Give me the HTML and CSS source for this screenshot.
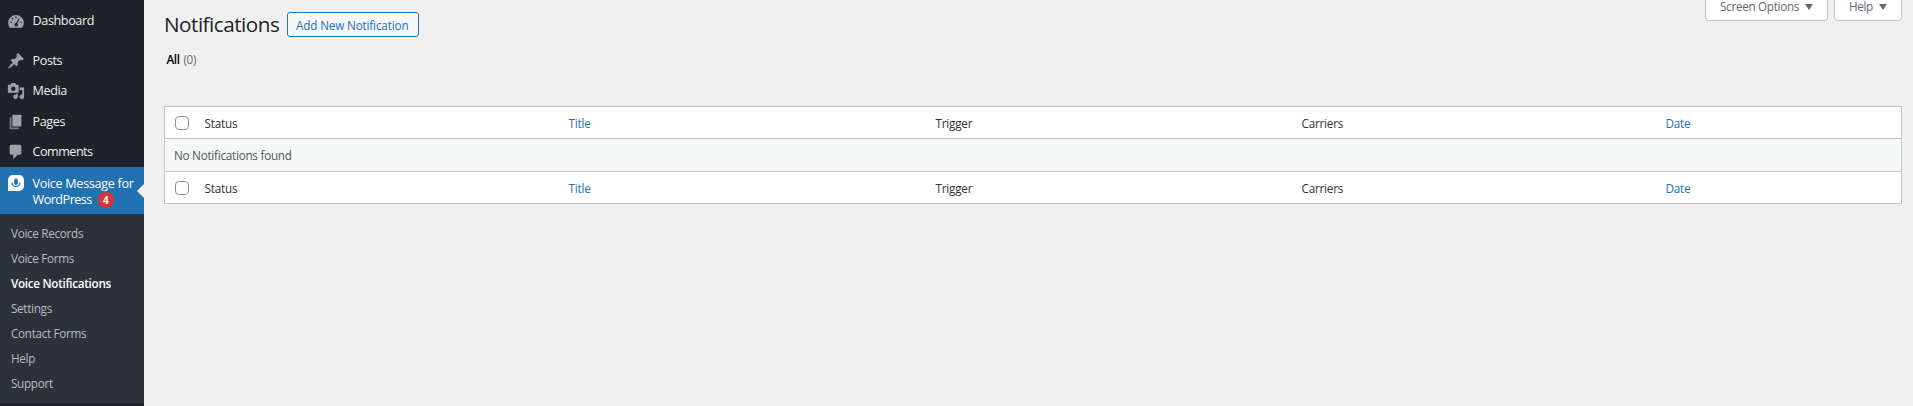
FILE: index.html
```html
<!DOCTYPE html>
<html lang="en">
<head>
<meta charset="utf-8">
<title>Notifications</title>
<link rel="stylesheet" href="styles.css">
</head>
<body>
<div class="app">
  <nav class="sidebar">
    <ul class="menu">
      <li class="item dashboard"><svg class="icon" viewBox="0 0 20 20"><path fill-rule="evenodd" d="M3.200 17.500h13.600A8.500 8.500 0 0 0 18.700 12a8.700 8.700 0 1 0-17.400 0c0 2.100.700 4 1.900 5.500zM10 5a.9.9 0 1 1 0 1.800.9.900 0 0 1 0-1.800zM6 6.500a.9.900 0 1 1 0 1.800.9.900 0 0 1 0-1.800zM13 7l.7.400-2.200 5.300a1.900 1.900 0 1 1-1.300-.5zM4.500 10.500a.9.900 0 1 1 0 1.800.9.900 0 0 1 0-1.800zM15.500 10.500a.9.900 0 1 1 0 1.800.9.900 0 0 1 0-1.800z"/></svg><span>Dashboard</span></li>
      <li class="item"><svg class="icon" viewBox="0 0 20 20"><path d="M10.440 3.020l1.820-1.820 6.360 6.350-1.830 1.820c-1.050-.68-2.480-.57-3.410.36l-.75.750c-.92.930-1.040 2.350-.35 3.410l-1.830 1.820-2.410-2.410-2.800 2.790c-.42.420-3.380 2.710-3.800 2.290s1.860-3.390 2.280-3.810l2.790-2.790L4.100 9.360l1.830-1.820c1.050.690 2.480.570 3.400-.36l.75-.75c.93-.92 1.050-2.350.36-3.410z"/></svg><span>Posts</span></li>
      <li class="item"><svg class="icon" viewBox="0 0 20 20"><path fill-rule="evenodd" d="M13 11V4c0-.55-.45-1-1-1h-1.670L9 1H5L3.670 3H2c-.55 0-1 .45-1 1v7c0 .55.45 1 1 1h10c.55 0 1-.45 1-1zM7 5a2.500 2.500 0 1 1 0 5 2.500 2.500 0 0 1 0-5zM14 6h5v10.500a2.500 2.500 0 1 1-2-2.450V9h-3zM10 14.050V13h2v3.500a2.500 2.500 0 1 1-2-2.450z"/></svg><span>Media</span></li>
      <li class="item"><svg class="icon" viewBox="0 0 20 20"><path d="M6 15V2h10v13z"/><path class="back" d="M5 16h8v2H3V5h2z"/></svg><span>Pages</span></li>
      <li class="item"><svg class="icon" viewBox="0 0 20 20"><path d="M5 2h9c1.100 0 2 .9 2 2v7c0 1.100-.9 2-2 2h-2l-5 5v-5H5c-1.100 0-2-.9-2-2V4c0-1.100.9-2 2-2z"/></svg><span class="t-comments">Comments</span></li>
      <li class="item current"><svg class="icon voice" viewBox="0 0 16 16"><path class="bubble" d="M5 0h6a5 5 0 0 1 5 5v6a5 5 0 0 1-5 5H0V5a5 5 0 0 1 5-5z"/><rect class="mic" x="6.200" y="3.500" width="3.600" height="6.500" rx="1.800"/><path class="arc" d="M4 7.500a4 4 0 0 0 8 0"/></svg><span><span class="t-vm">Voice Message for</span><br><span class="t-wp">WordPress</span><b class="badge">4</b></span></li>
    </ul>
    <ul class="submenu">
      <li>Voice Records</li>
      <li>Voice Forms</li>
      <li class="s-notif">Voice Notifications</li>
      <li>Settings</li>
      <li>Contact Forms</li>
      <li>Help</li>
      <li>Support</li>
    </ul>
  </nav>
  <main class="content">
    <div class="top">
      <div class="heading"><h1>Notifications</h1><a class="add"><span>Add New Notification</span></a></div>
      <div class="screen-meta"><button class="options"><span>Screen Options</span><i></i></button><button class="help"><span>Help</span><i></i></button></div>
    </div>
    <div class="filters"><b>All</b><span>(0)</span></div>
    <div class="table">
      <div class="row head"><i class="check"></i><span>Status</span><a>Title</a><span>Trigger</span><span>Carriers</span><a>Date</a></div>
      <div class="row empty"><span>No Notifications found</span></div>
      <div class="row foot"><i class="check"></i><span>Status</span><a>Title</a><span>Trigger</span><span>Carriers</span><a>Date</a></div>
    </div>
  </main>
</div>
</body>
</html>
```
FILE: styles.css
```css
* { box-sizing: border-box; }
body { margin: 0; background: #f0f0f0; color: #3c434a; font: 12px/18px "Open Sans", "Noto Sans", sans-serif; overflow: hidden; }
ul { list-style: none; margin: 0; padding: 0; }
.app { display: flex; height: 406px; }
.sidebar { width: 144px; background: #1d2327; flex: none; }
.menu { height: 214px; padding-top: 5.500px; color: #f0f0f1; font-size: 12.600px; line-height: 16px; letter-spacing: -.38px; }
.item { display: flex; height: 30.600px; align-items: center; padding-left: 7px; white-space: nowrap; }
.dashboard { margin-bottom: 9.300px; }
.icon { width: 18px; height: 18px; margin-right: 7.500px; fill: #9ca2a7; flex: none; }
.back { opacity: .7; }
.t-comments { letter-spacing: -.5px; }
.current { position: relative; height: 47px; margin-top: -.8px; background: #2271b1; color: #fff; align-items: flex-start; padding: 9px 0 0 8px; }
.current::after { content: ""; position: absolute; right: 0; top: 17px; border: 7px solid transparent; border-right-color: #f0f0f0; border-left: 0; }
.t-vm { letter-spacing: -.3px; }
.t-wp { letter-spacing: -.5px; }
.voice { width: 16px; height: 16px; margin: -1px 8.500px 0 0; }
.bubble { fill: #fff; }
.mic { fill: #2271b1; }
.arc { fill: none; stroke: #2271b1; stroke-width: 1.300; }
.badge { display: inline-block; width: 16px; height: 16px; margin-left: 6px; border-radius: 50%; background: #d63638; font-size: 10px; line-height: 16px; text-align: center; letter-spacing: 0; vertical-align: top; }
.submenu { height: 189px; padding: 7.300px 0 0 11px; background: #2c3338; color: #b9bdc0; font-size: 11.700px; line-height: 25px; letter-spacing: -.3px; }
.submenu .s-notif { color: #fff; font-weight: 600; }
.content { flex: 1; padding: 0 11px 0 20px; }
.top { display: flex; justify-content: space-between; height: 48px; }
.heading { display: flex; align-items: flex-start; padding-top: 12px; }
h1 { margin: 0; width: 123px; font-size: 20.700px; line-height: 25px; font-weight: 400; color: #1d2327; letter-spacing: -.5px; white-space: nowrap; }
.add { width: 132px; height: 25px; padding-left: 8px; border: 1px solid #2271b1; border-radius: 3px; background: #f6f7f7; color: #2271b1; font-weight: 500; font-size: 11.700px; line-height: 25px; letter-spacing: -.15px; white-space: nowrap; }
.screen-meta { display: flex; gap: 6px; }
.screen-meta button { display: flex; align-items: flex-start; height: 21px; padding: 0 0 0 14px; border: 1px solid #c3c4c7; border-top: 0; border-radius: 0 0 4px 4px; background: #fff; color: #646970; font: 11.700px/13px "Open Sans", sans-serif; letter-spacing: -.35px; white-space: nowrap; }
.screen-meta .options { width: 123px; letter-spacing: -.3px; }
.screen-meta .help { width: 68px; }
.screen-meta i { margin: 4px 0 0 6px; border: 4px solid transparent; border-top: 6px solid #646970; border-bottom: 0; }
.filters { display: flex; gap: 4px; padding: 2px 0 0 2.500px; height: 58px; font-size: 11.700px; color: #646970; letter-spacing: -.4px; }
.filters b { color: #000; font-weight: 600; }
.table { height: 98px; border: 1px solid #c3c4c7; background: #fff; font-size: 11.700px; letter-spacing: -.2px; }
.row { display: grid; grid-template-columns: 39.500px 364px 367px 366px 364px 1fr; height: 31px; line-height: 32px; color: #2c3338; }
.row a { color: #2271b1; }
.check { width: 14px; height: 14px; margin: 9px 0 0 10px; border: 1px solid #8c8f94; border-radius: 4px; }
.row.empty { display: block; height: 34px; border: solid #c3c4c7; border-width: 1px 0; background: #f6f7f7; color: #50575e; padding-left: 9px; letter-spacing: -.25px; }
```
